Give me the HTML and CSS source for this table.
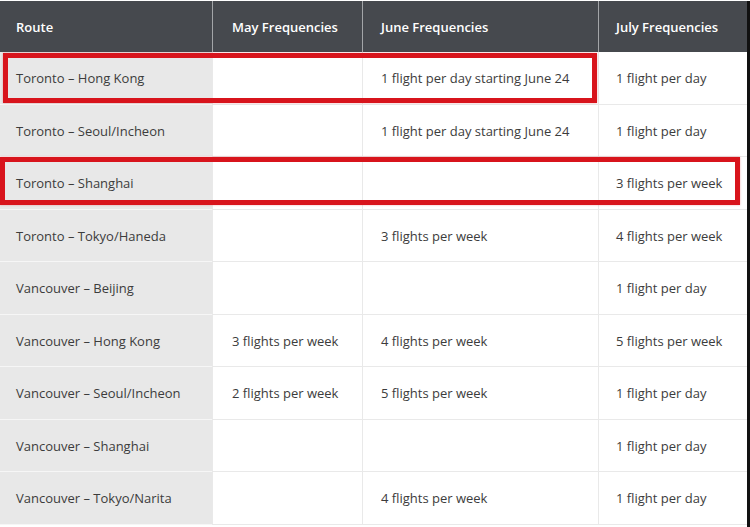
FILE: index.html
```html
<!DOCTYPE html>
<html>
<head>
<meta charset="utf-8">
<link rel="stylesheet" href="styles.css">
</head>
<body>
<div class="page">
  <div class="table">
    <div class="cell head c1">Route</div>
    <div class="cell head c2">May Frequencies</div>
    <div class="cell head c3">June Frequencies</div>
    <div class="cell head c4">July Frequencies</div>

    <div class="cell route c1">Toronto – Hong Kong</div>
    <div class="cell c2"></div>
    <div class="cell c3">1 flight per day starting June 24</div>
    <div class="cell c4">1 flight per day</div>

    <div class="cell route c1">Toronto – Seoul/Incheon</div>
    <div class="cell c2"></div>
    <div class="cell c3">1 flight per day starting June 24</div>
    <div class="cell c4">1 flight per day</div>

    <div class="cell route c1">Toronto – Shanghai</div>
    <div class="cell c2"></div>
    <div class="cell c3"></div>
    <div class="cell c4">3 flights per week</div>

    <div class="cell route c1">Toronto – Tokyo/Haneda</div>
    <div class="cell c2"></div>
    <div class="cell c3">3 flights per week</div>
    <div class="cell c4">4 flights per week</div>

    <div class="cell route c1">Vancouver – Beijing</div>
    <div class="cell c2"></div>
    <div class="cell c3"></div>
    <div class="cell c4">1 flight per day</div>

    <div class="cell route c1">Vancouver – Hong Kong</div>
    <div class="cell c2">3 flights per week</div>
    <div class="cell c3">4 flights per week</div>
    <div class="cell c4">5 flights per week</div>

    <div class="cell route c1">Vancouver – Seoul/Incheon</div>
    <div class="cell c2">2 flights per week</div>
    <div class="cell c3">5 flights per week</div>
    <div class="cell c4">1 flight per day</div>

    <div class="cell route c1">Vancouver – Shanghai</div>
    <div class="cell c2"></div>
    <div class="cell c3"></div>
    <div class="cell c4">1 flight per day</div>

    <div class="cell route c1">Vancouver – Tokyo/Narita</div>
    <div class="cell c2"></div>
    <div class="cell c3">4 flights per week</div>
    <div class="cell c4">1 flight per day</div>
  </div>
  <div class="edge"></div>
  <div class="mark mark-one"></div>
  <div class="mark mark-two"></div>
</div>
</body>
</html>
```

FILE: styles.css
```css
html, body {
  margin: 0;
  padding: 0;
  background: #ffffff;
}

body {
  font-family: "Open Sans", "Liberation Sans", sans-serif;
  font-size: 13px;
  color: #3c3c3c;
}

.page {
  position: relative;
  width: 750px;
  height: 527px;
  display: flex;
  padding-top: 1px;
  box-sizing: border-box;
}

.table {
  width: 747px;
  display: grid;
  grid-template-columns: 212px 150px 236px 149px;
  grid-template-rows: 51px repeat(9, 52.5px);
  align-content: start;
}

.edge {
  width: 3px;
  background: #111111;
}

.cell {
  display: flex;
  align-items: center;
  padding: 1px 18px 0;
  border-bottom: 1px solid #e9e9e9;
  border-left: 1px solid #e9e9e9;
  box-sizing: border-box;
  white-space: nowrap;
}

.c1 {
  border-left: none;
  padding-left: 16px;
}

.c2 { padding-left: 19px; }
.c3 { padding-left: 18px; }
.c4 { padding-left: 17px; }

.head {
  background: #46494e;
  color: #ffffff;
  font-weight: 600;
  padding-top: 0;
  border-bottom: none;
  border-left: 1px solid #a3a5a8;
}

.head.c1 {
  border-left: none;
}

.route {
  background: #e8e8e8;
  border-bottom-color: #f6f6f6;
}

.mark {
  position: absolute;
  border: 5px solid #d8141c;
  box-sizing: border-box;
  box-shadow: 0 0 2px rgba(216, 20, 28, 0.35);
}

.mark-one {
  left: 3px;
  top: 53px;
  width: 594px;
  height: 50px;
}

.mark-two {
  left: 0;
  top: 157px;
  width: 740px;
  height: 48px;
}
```
